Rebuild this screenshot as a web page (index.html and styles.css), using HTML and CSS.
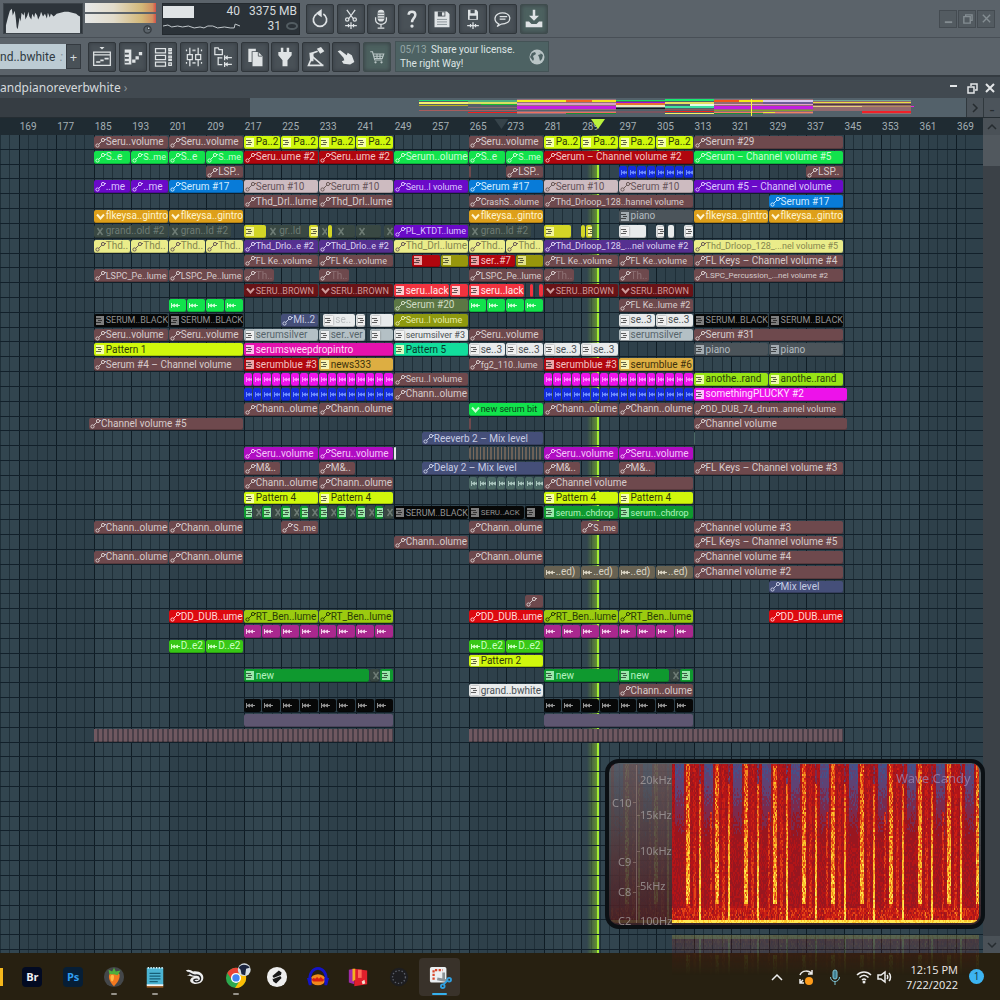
FILE: index.html
```html
<!DOCTYPE html>
<html lang="en">
<head>
  <meta charset="UTF-8">
  <meta name="viewport" content="width=device-width, initial-scale=1.0">
  <title>Playlist</title>
  <link rel="stylesheet" href="styles.css">
</head>
<body>
  <svg class="sprite" aria-hidden="true">
    <symbol id="i-a" viewBox="0 0 11 11"><g fill="none" stroke="currentColor"><circle cx="2.5" cy="8.5" r="1.6"/><circle cx="8" cy="3" r="1.6"/><path d="M3.7 7.3 6.8 4.200M9.500 2.500H11"/></g></symbol>
    <symbol id="i-p" viewBox="0 0 11 11"><path fill="currentColor" opacity=".85" d="M1 1h8v9H1z"/><path stroke="#000" stroke-opacity=".6" d="M1 3.500h5M3 5.500h4M1 7.500h5"/></symbol>
    <symbol id="i-w" viewBox="0 0 11 11"><path fill="currentColor" d="M1 3h1v2l3-1.500V5l3-1.500V5h2v1H8v1.500L5 6v1.500L2 6v2H1z"/></symbol>
    <symbol id="i-v" viewBox="0 0 11 11"><path fill="none" stroke="currentColor" stroke-width="2" d="m2 3.500 3.500 4 3.500-4"/></symbol>
    <symbol id="i-x" viewBox="0 0 11 11"><path fill="none" stroke="currentColor" stroke-width="1.500" d="m2.500 2 5 7m0-7-5 7"/></symbol>
  </svg>

  <header class="toolbar">
    <div class="bar">
      <div class="scope"><svg viewBox="0 0 80 30" preserveAspectRatio="none"><path fill="#d3d9dc" d="M2 30V22L4 14 6 7 8 5 9 12 11 7 12 14 13 24 14 26 16 14 17 18 18 9 20 12 21 8 22 16 24 12 25 8 26 13 28 16 29 10 31 14 32 9 34 12 35 16 37 12 38 8 40 13 42 10 44 15 45 9 47 14 48 10 51 13 54 10 58 9 62 8 66 8 70 9 74 10 76 12 78 13V30z"/></svg></div>
      <div class="meters">
        <i class="meter"></i><i class="meter"></i>
        <svg class="clock" viewBox="0 0 10 10"><circle cx="5" cy="5" r="4" fill="none" stroke="#353b40" stroke-width="1.500"/><path stroke="#353b40" d="M5 2v3h3"/></svg>
      </div>
      <div class="cpu">
        <div class="cpu-graph"><i></i><svg viewBox="0 0 80 12"><path fill="none" stroke="#c5ccd0" d="M0 6l5-1 4 2 6-1 5 1 6-1 6 2 6-1 4 1 4-2 5 0 5 2 7-1 6 1 4 0 1-4 5 2"/></svg></div>
        <div class="cpu-num"><span>40</span><span>3375 MB</span><span></span><span class="poly">31 <svg viewBox="0 0 12 8"><ellipse cx="6" cy="4" rx="5" ry="3" fill="none" stroke="#535d62" stroke-width="2"/></svg></span></div>
      </div>
      <div class="tools main-tools">
        <button title="Undo"><svg viewBox="0 0 24 24"><path class="ln" d="M8 6a8 8 0 1 0 8 0"/><path d="m14 0-7 5 7 5z"/></svg></button>
        <button title="Cut"><svg viewBox="0 0 24 24"><path class="ln thin" d="m7 1 8 11M17 1 9 12"/><circle class="ln thin" cx="7.500" cy="12.500" r="2"/><circle class="ln thin" cx="16.500" cy="12.500" r="2"/><path class="ln thin" d="M5 20h14M9 18v4m3-6v8m3-6v4"/></svg></button>
        <button title="Record"><svg viewBox="0 0 24 24"><rect x="8" y="1" width="8" height="14" rx="4"/><path class="ln thin" d="M5.500 10v3a6.500 5.500 0 0 0 13 0v-3M12 18v4m-4 1h8"/><path stroke="#495157" d="M8 5h8M8 8h8m-8 3h8"/></svg></button>
        <button title="Help"><svg viewBox="0 0 24 24"><path class="ln big" d="M8 7c0-5 8-5 8 0 0 4-4 4-4 9"/><circle cx="12" cy="20.500" r="2"/></svg></button>
        <button title="Save"><svg viewBox="0 0 24 24"><path d="M3 3h15l3 3v16H3z"/><path fill="#495157" d="M7 3h9v6H7z"/><path d="M12 4h3v4h-3z"/><path stroke="#7c858a" d="M6 12.500h12m-12 3h12m-12 3h12"/></svg></button>
        <button title="Save new"><svg viewBox="0 0 24 24"><path d="M6 1h10l2 2v10H6z"/><path fill="#495157" d="M9 1h5v4H9zM8 8h8v4H8z"/><path class="ln thin" d="M5 20h14M9 18v4m3-6v8m3-6v4"/></svg></button>
        <button title="Comments"><svg viewBox="0 0 24 24"><path class="ln thin" d="M7 18c-6-3-6-9-1-12 5-3 13-1 14 4 1 6-5 8-10 8l-5 3z"/><path class="ln thin" d="M8 9h9m-9 3h7"/></svg></button>
        <button title="Export" class="on"><svg viewBox="0 0 24 24"><path d="M10.500 1h3v7H18l-6 6-6-6h4.500zM2 15h4l3 3h6l3-3h4v7H2z"/></svg></button>
      </div>
      <div class="win-btns">
        <button title="Minimize"><svg viewBox="0 0 12 12"><path d="M2 9h8v2H2z"/></svg></button>
        <button title="Restore"><svg viewBox="0 0 12 12"><path class="ln thin" d="M4 4V2h7v6H9M2 4h7v7H2z"/></svg></button>
        <button title="Close"><svg viewBox="0 0 12 12"><path class="ln thin" d="m2 2 8 8m0-8-8 8"/></svg></button>
      </div>
    </div>

    <div class="bar">
      <div class="picker"><span>nd..bwhite</span><i>:</i></div>
      <button class="plus">+</button>
      <div class="tools win-tools">
        <button title="Playlist"><svg viewBox="0 0 24 24"><path d="M9 0h6l-3 3z"/><path class="ln thin" d="M2 6h20v16H2zM2 9.500h20"/><path class="ln" d="M5 18h5m0-2h4m1-2h5"/></svg></button>
        <button title="Piano roll"><svg viewBox="0 0 24 24"><path d="M2 3h8v18H2zM11 15h4v4h-4zm4-4h4v4h-4zm4-5h4v4h-4z"/><path fill="#495157" d="M2 7h5v2H2zm0 5h5v2H2zm0 5h5v2H2z"/></svg></button>
        <button title="Channel rack"><svg viewBox="0 0 24 24"><path class="ln thin" d="M3 2h12v5H3zm0 8h12v5H3zm0 8h12v5H3zM19 2h3v2h-3zm0 4h3v2h-3zm0 5h3v2h-3zm0 4h3v1h-3zm0 4h3v3h-3z"/></svg></button>
        <button title="Mixer"><svg viewBox="0 0 24 24"><path class="ln thin" d="M7 1v8m0 6v8M17 1v8m0 6v8M4 9h6v6H4zm10 0h6v6h-6z"/><path class="ln thin" stroke-dasharray="2 2" d="M3 3v4m8-4v4m2-4v4m8-4v4M3 18v4m8-4v4m2-4v4m8-4v4"/></svg></button>
        <button title="Browser"><svg viewBox="0 0 24 24"><path class="ln thin" d="M1 1h4l1 2h4v6H1zM5 12v9h5m-5-8h5"/><path d="M12 10h1.500v2l3-2v2h5v1.500h-5v2L13.500 13.500V16H12zM12 18h1.500v2l3-2v2h5v1.500h-5v2l-3-2V24H12z"/></svg></button>
        <button title="Project"><svg viewBox="0 0 24 24"><path d="M4 2h9v3H8v13H4z"/><path d="M9 6h7l5 5v12H9z"/><path stroke="#495157" fill="none" d="M16 6v5h5"/></svg></button>
        <button title="Plugins"><svg viewBox="0 0 24 24"><path d="M7 1h3v5h4V1h3v5h3v4l-5 6v7H9v-7L4 10V6h3z"/></svg></button>
        <button title="Tempo tap"><svg viewBox="0 0 24 24"><path d="m13 2 5-2 4 5-5 3z"/><path class="ln" d="M14 5 6 8v7l-3 7h18M7 11l13 11"/><path d="M4 7h5v10H5z"/></svg></button>
        <button title="Touch"><svg viewBox="0 0 24 24"><path d="M2 5l3-1 8 6 1-3 5 3 3 8-5 3-8-1-2-3 3-1-1-3z"/></svg></button>
        <button title="Shop" class="on"><svg viewBox="0 0 24 24"><path class="ln thin" d="M3 5h3l3 11h10M7 8h14l-2 6H9M8 11h12M12 8v6m4-6v6"/><circle cx="10" cy="19" r="1.500"/><circle cx="18" cy="19" r="1.500"/></svg></button>
      </div>
      <a class="news" href="#news">
        <span><b>05/13</b> Share your license.<br>The right Way!</span>
        <svg viewBox="0 0 16 16"><circle cx="8" cy="8" r="7.500" fill="#b9c5c6"/><path fill="#4d6263" d="M3 4l3-1 1 2-3 2 1 3-1 2-3-4zM10 3l4 3-1 4-2 2-1-4-1-2 3-1z"/></svg>
      </a>
    </div>
  </header>

  <main class="playlist">
    <div class="titlebar">
      <h1>andpianoreverbwhite <small>›</small></h1>
      <div class="child-btns">
        <button title="Minimize"><svg viewBox="0 0 12 12"><path d="M2 3h7v2H2z"/></svg></button>
        <button title="Restore"><svg viewBox="0 0 12 12"><path class="ln thin" d="M5 4V2h6v6H9M2 5h6v6H2z"/></svg></button>
        <button title="Close"><svg viewBox="0 0 12 12"><path class="ln" d="m2 2 8 8m0-8-8 8"/></svg></button>
      </div>
    </div>

    <div class="overview">
      <svg id="overview" viewBox="0 0 966 19" preserveAspectRatio="none" shape-rendering="crispEdges"></svg>
      <button title="Scroll right">
        <svg viewBox="0 0 12 12"><path class="ln thin" d="m4 2 4 4-4 4"/></svg>
      </button>
      <button title="Zoom">-</button>
    </div>

    <div class="stage">
      <div class="canvas">
        <div class="ruler" id="ruler"></div>
        <div class="lanes">
          <div class="beats" id="beats"></div>
          <div class="playhead" id="playhead"></div>
          <div class="tracks" id="tracks"></div>
        </div>
      </div>
      <div class="scroll">
        <button title="Up"><svg viewBox="0 0 12 12"><path class="ln thin" d="m2 8 4-4 4 4"/></svg></button>
        <i class="thumb"></i>
        <button title="Down"><svg viewBox="0 0 12 12"><path class="ln thin" d="m2 4 4 4 4-4"/></svg></button>
      </div>
    </div>
  </main>

  <footer class="taskbar">
    <i class="edge"></i>
    <div class="dock">
      <button title="Bridge"><span class="adobe br">Br</span></button>
      <button title="Photoshop"><span class="adobe ps">Ps</span></button>
      <button title="FL Studio" class="open"><svg viewBox="0 0 24 24"><circle cx="12" cy="12" r="11" fill="#44474a"/><path fill="#f4791f" d="M7 9c4-3 9-3 11 0 1 5-3 10-6 13C9 20 5 13 7 9z"/><path fill="#ffb845" d="M9 10c2-1 3 0 3 2s-1 5-2 5-3-5-1-7z"/><path fill="#4fae3c" d="M7 9 6 4l4 2 2-4 2 4 5-1-3 5-4-1z"/></svg></button>
      <button title="Notepad" class="open"><svg viewBox="0 0 24 24"><path fill="#4bb4d3" d="M3 2h18v19H3z"/><path fill="#f3f3f3" d="M3 20h18v2H3z"/><path fill="#b1682a" d="M3 22h18v1.500H3z"/><path stroke="#165f78" stroke-width="1.500" d="M6 8h12M6 11h12M6 14h12M6 17h9"/><path stroke="#d3f2fb" stroke-dasharray="1.500 1.500" stroke-width="2" d="M4 2h17"/></svg></button>
      <button title="Snake"><svg viewBox="0 0 24 24"><path fill="#eee" d="M2 5c3-2 6 0 8 1 7-1 12 3 11 8-1 6-10 7-13 4-3-2 0-6 3-6L3 10c3 0 4-1 3-2z"/><path fill="none" stroke="#222" stroke-width="1.500" d="M4 7c3 0 4 3 8 3 7-1 8 6 3 7-3 1-5-1-4-2s4-1 4 0"/></svg></button>
      <button title="Chrome" class="open"><svg viewBox="0 0 24 24"><circle cx="12" cy="13" r="11" fill="#2da94f"/><path fill="#ea4335" d="M2.500 7.500A11 11 0 0 1 21.500 7.500L12 8l-4.500 7z"/><path fill="#fbbc05" d="M21.500 7.500A11 11 0 0 1 11 24l5-8-2-8z"/><circle cx="12" cy="13" r="5.500" fill="#fff"/><circle cx="12" cy="13" r="4" fill="#4285f4"/><circle cx="21" cy="4" r="7" fill="#d5dde4"/><path fill="#1b2540" d="M15 2c2-5 10-4 12 0l-4 1-1 7-4-1-1-5z"/></svg></button>
      <button title="Splice"><svg viewBox="0 0 24 24"><circle cx="12" cy="12" r="11" fill="#eee"/><path fill="#181818" d="m7 11 7-6 3 2-1 4-7 3zM8 17l-1-3 8-4 2 3-6 6z"/><path stroke="#eee" d="m7 14 10-4"/></svg></button>
      <button title="Audacity"><svg viewBox="0 0 24 24"><ellipse cx="12" cy="15" rx="8" ry="6" fill="#f08a1c"/><path fill="#d81e12" d="m5 15 2-2 2 1 2-2 2 2 2-2 2 2 2 1-2 2H7z"/><path fill="none" stroke="#1414c8" stroke-width="3" d="M3 16C2-2 22-2 21 16"/><path fill="#1414c8" d="M0 13h5v8H2zM24 13h-5v8h3z"/></svg></button>
      <button title="WinRAR"><svg viewBox="0 0 24 24"><path fill="#a02aa8" d="M2 4l6-1v17l-6-2z"/><path fill="#e0202c" d="M8 3l14 2v15L8 22z"/><path fill="#f4b31e" d="M6 3l3 0v12l-3 2z"/><path fill="#ff6b58" d="M12 4h4v9h-4z"/><path fill="#f0e0d0" d="M16 17l3-2 1 4-3 1z"/></svg></button>
      <button title="Recorder"><svg viewBox="0 0 24 24"><circle cx="12" cy="12" r="10" fill="#1d1d20"/><circle cx="12" cy="12" r="7" fill="none" stroke="#5a5e68" stroke-dasharray="1.500 2" stroke-width="1.500"/></svg></button>
      <button title="Snipping Tool" class="open active"><svg viewBox="0 0 24 24"><rect x="1" y="1" width="18" height="17" rx="2" fill="#eceff1"/><path fill="none" stroke="#d9472b" stroke-width="2.500" stroke-dasharray="2.500 1.500" d="M5 15V4.500h10"/><path stroke="#8b9296" fill="none" stroke-width="3" d="M16 7v8M9 14l10 2"/><circle cx="22" cy="15" r="2" fill="none" stroke="#2f9fe0" stroke-width="2"/><circle cx="15" cy="22" r="2" fill="none" stroke="#2f9fe0" stroke-width="2"/><path stroke="#2f9fe0" stroke-width="2" d="m20 16-4 4"/></svg></button>
    </div>
    <div class="tray">
      <svg viewBox="0 0 16 16"><path class="ln thin" d="m3 11 5-5 5 5"/></svg>
      <svg viewBox="0 0 16 16"><path class="ln thin" d="M2 6c2-5 9-5 12-1m0-4v4h-4M6 14H2v-4m0 4 3-3"/><circle cx="11" cy="12" r="4" fill="#ff9c1a"/></svg>
      <svg viewBox="0 0 16 16"><rect x="6" y="1" width="4" height="9" rx="2" fill="#3f7f92" stroke="#7fc4d6"/><path fill="none" stroke="#7fc4d6" d="M3.500 8c0 6 9 6 9 0M8 12.500V16"/></svg>
      <svg viewBox="0 0 16 16"><path class="ln thin" d="M1 6c4-4 10-4 14 0M3.500 8.500c3-3 6-3 9 0M6 11c1.500-1.500 2.500-1.500 4 0"/><circle cx="8" cy="13" r="1.500"/></svg>
      <svg viewBox="0 0 16 16"><path class="ln thin" d="M1 6h3l4-3v10l-4-3H1zM10 6c1 1 1 3 0 4m2-6c2 2 2 6 0 8"/></svg>
      <time>12:15 PM<br>7/22/2022</time>
      <b class="badge">1</b>
    </div>
  </footer>

  <svg class="candy" id="candy" viewBox="0 0 380 216" shape-rendering="crispEdges">
    <defs>
      <linearGradient id="glass" x2="0" y2="1"><stop offset="0" stop-color="#5c6367"/><stop offset=".4" stop-color="#474a4e"/><stop offset="1" stop-color="#3a1c20"/></linearGradient>
      <linearGradient id="fade" x2="0" y2="1"><stop offset="0" stop-color="#fff"/><stop offset="1" stop-color="#000"/></linearGradient>
      <mask id="mirror"><rect x="0" y="176" width="380" height="40" fill="url(#fade)"/></mask>
      <clipPath id="inner"><rect x="4" y="4" width="370" height="160" rx="8"/></clipPath>
    </defs>
    <rect x="2" y="2" width="376" height="166" rx="12" fill="url(#glass)" fill-opacity=".85" stroke="#0b1014" stroke-width="4" shape-rendering="auto"/>
    <g clip-path="url(#inner)"><g id="heat-left" opacity=".14"></g><g id="heat"></g></g>
    <g mask="url(#mirror)"><use href="#heat" transform="matrix(1 0 0 -1 0 341)" opacity=".2"/></g>
    <g class="candy-text">
      <path d="M31 6v158M28 43h3M31 56h4M31 92h4M28 103h3M31 127h4M28 133h3" stroke="#a08a80" opacity=".7"/>
      <text x="35" y="25">20kHz</text><text x="35" y="60">15kHz</text><text x="35" y="96">10kHz</text><text x="35" y="131">5kHz</text><text x="35" y="166">100Hz</text>
      <text x="7" y="48">C10</text><text x="13" y="107">C9</text><text x="13" y="137">C8</text><text x="13" y="166">C2</text>
      <text class="brand" x="291" y="24">Wave Candy</text>
    </g>
  </svg>

  <script src="script.js"></script>
</body>
</html>
```
FILE: styles.css
```css
* {
  box-sizing: border-box;
  margin: 0;
  padding: 0;
}
body {
  display: flex;
  flex-direction: column;
  height: 100vh;
  overflow: hidden;
  position: relative;
  font-family: 'Noto Sans', 'Open Sans', sans-serif;
  background: #2f3f48;
  color: #d5dadd;
}
button {
  border: none;
  background: none;
  color: inherit;
  font: inherit;
}
svg {
  display: block;
  fill: currentColor;
}
.sprite {
  position: absolute;
  width: 0;
  height: 0;
}
.ln {
  fill: none;
  stroke: currentColor;
  stroke-width: 2;
}
.ln.thin { stroke-width: 1.5; }
.ln.big { stroke-width: 3; }

/* toolbar */
.toolbar {
  background: #5b636a;
  border-bottom: 2px solid #343b41;
}
.bar {
  display: flex;
  align-items: center;
  height: 38px;
  border-bottom: 1px solid #484f56;
}
.bar + .bar {
  height: 37px;
  border-bottom: none;
}
.scope {
  width: 80px;
  height: 31px;
  margin-left: 3px;
  background: #2d343a;
  border: 1px solid #3c4349;
}
.scope svg { width: 100%; height: 100%; }
.meters {
  width: 71px;
  height: 31px;
  margin-left: 2px;
  display: flex;
  flex-direction: column;
  gap: 2px;
}
.meter {
  height: 9px;
  background: linear-gradient(to right, #e6e8e8, #e2dccb 40%, #d3b878 80%, #d09060 95%, #d5504a);
}
.clock {
  width: 9px;
  height: 9px;
  margin-left: 58px;
}
.cpu {
  display: flex;
  width: 138px;
  height: 32px;
  margin-left: 6px;
  background: #2b3238;
  border: 1px solid #242a2f;
  font-size: 12px;
  line-height: 15px;
}
.cpu-graph { width: 54px; }
.cpu-graph i {
  display: block;
  width: 31px;
  height: 12px;
  margin-top: 2px;
  background: #dfe3e5;
}
.cpu-graph svg { width: 78px; height: 12px; margin-top: 2px; }
.cpu-num {
  flex: 1;
  display: grid;
  grid-template-columns: 23px 1fr;
  text-align: right;
  font-family: Roboto, sans-serif;
  white-space: nowrap;
}
.cpu-num span:nth-child(2) { padding-right: 2px; }
.poly {
  display: flex;
  align-items: center;
  justify-content: flex-end;
  gap: 4px;
}
.poly svg { width: 14px; height: 8px; }
.tools {
  display: flex;
  justify-content: space-between;
}
.main-tools { width: 242px; margin-left: 6px; }
.win-tools { width: 303px; margin-left: 7px; }
.tools button {
  display: grid;
  place-items: center;
  width: 28px;
  height: 30px;
  border: 1px solid #30363b;
  border-radius: 2px;
  background: #495157;
  box-shadow: inset 0 0 4px #373d43;
}
.tools button.on {
  background: #4c615f;
  border-color: #3f4c4d;
}
.tools svg { width: 20px; height: 20px; color: #dfe3e5; }
.win-tools .on svg { width: 18px; height: 18px; color: #b9c5c5; }
.win-btns {
  display: flex;
  margin-left: auto;
  margin-right: 5px;
  gap: 1px;
}
.win-btns button {
  display: grid;
  place-items: center;
  width: 18px;
  height: 18px;
  border: 1px solid #444b51;
  background: #535b61;
  color: #848d92;
}
.win-btns svg { width: 11px; height: 11px; }
.picker {
  display: flex;
  justify-content: space-between;
  align-items: center;
  width: 66px;
  height: 25px;
  background: #bccbd3;
  color: #2f3a42;
  font: 12px Roboto, sans-serif;
}
.picker i { padding-right: 3px; color: #7a8990; }
.plus {
  width: 15px;
  height: 25px;
  border: 1px solid #343a40;
  background: #495157;
  font-size: 13px;
  line-height: 20px;
}
.news {
  display: flex;
  align-items: center;
  justify-content: space-between;
  width: 154px;
  height: 31px;
  margin-left: 4px;
  padding: 0 3px 0 4px;
  background: #4d6263;
  border: 1px solid #445356;
  color: #dde4e4;
  font-family: Roboto, 'Noto Sans', sans-serif;
  font-size: 10px;
  line-height: 14px;
  text-decoration: none;
  white-space: nowrap;
}
.news b { font-weight: normal; color: #94a5a5; padding-right: 2px; }
.news svg { width: 16px; height: 16px; }

/* playlist window */
.playlist {
  flex: 1;
  min-height: 0;
  display: flex;
  flex-direction: column;
}
.titlebar {
  display: flex;
  align-items: center;
  justify-content: space-between;
  height: 21px;
  background: #414950;
}
.titlebar h1 {
  font-size: 12px;
  font-weight: normal;
}
.titlebar small { font-size: 12px; color: #8a9298; }
.child-btns { display: flex; gap: 6px; padding-right: 4px; color: #e3e6e8; }
.child-btns svg { width: 12px; height: 12px; }
.overview {
  display: flex;
  height: 20px;
  border-bottom: 1px solid #252d32;
  background: #53616a;
}
.overview > svg { flex: 1; min-width: 0; height: 19px; }
.overview button {
  display: grid;
  place-items: center;
  width: 17px;
  border-left: 1px solid #30383d;
  background: #4c545b;
  color: #262c30;
}
.overview button svg { width: 12px; height: 12px; }
.stage {
  flex: 1;
  min-height: 0;
  display: flex;
}
.canvas {
  flex: 1;
  min-width: 0;
  min-height: 0;
  display: flex;
  flex-direction: column;
}

/* one column per quarter bar */
.ruler,
.beats,
.track {
  display: grid;
  grid-template-columns: repeat(839, minmax(0, 1fr));
}
.ruler {
  position: relative;
  height: 17px;
  background: #1f2b32;
  font: 10px/18px Roboto, sans-serif;
  color: #a3aeb4;
}
.ruler span { padding-left: 1px; white-space: nowrap; }
.marker {
  position: absolute;
  top: 1px;
  width: 14px;
  height: 10px;
  margin-left: -7px;
  background: #b9f23c;
  clip-path: polygon(0 0, 100% 0, 50% 100%);
}
.marker.dim { background: #36434a; }
.lanes {
  flex: 1;
  min-height: 0;
  position: relative;
  display: flex;
  padding-bottom: 3px;
  background: #2e404a;
}
.beats {
  position: absolute;
  inset: 0;
}
.beats i { border-left: 1px solid #1f2f38; }
.beats i.bar8 { border-left-color: #0f1c24; }
.beats i.light { background: #32454f; }
.playhead {
  position: absolute;
  top: 0;
  bottom: 0;
  width: 12px;
  margin-left: -11px;
  border-right: 2px solid #a5ee34;
  background: linear-gradient(to right, #6fa02c00, #6fa02ccc);
}
.tracks {
  position: relative;
  flex: 1;
  display: grid;
  grid-template-rows: repeat(55, minmax(0, 1fr));
}
.track {
  min-height: 0;
  border-bottom: 1px solid #12202a;
  grid-template-rows: 100%;
}
.clip {
  display: flex;
  align-items: center;
  grid-row: 1;
  min-width: 0;
  margin-top: 1px;
  margin-right: 1px;
  padding-left: 1px;
  overflow: hidden;
  border-radius: 2px;
  box-shadow: inset 0 -1px #0003;
  font: 10px/12px Roboto, 'Noto Sans', sans-serif;
  white-space: nowrap;
}
.clip svg { flex: none; width: 11px; height: 11px; }
.clip.small { font-size: 9px; }
.clip.tiny { font-size: 8px; }
.clip.faint span { opacity: .3; }

.brown { background: #6e494d; color: #d6cbcb; }
.lime { background: #d0f80c; color: #2f3a08; }
.green { background: #12e24c; color: #caffd4; }
.red { background: #b0060e; color: #f3c2c2; }
.violet { background: #6a0ac8; color: #dcc4ff; }
.blue { background: #087bd8; color: #d0ecff; }
.pink { background: #cdbbc0; color: #66545a; }
.orange { background: #dd9f1a; color: #fff5cf; }
.mute { background: #394843; color: #6d7b74; }
.yellow { background: #d3d626; color: #f8f8b0; }
.cream { background: #eaec8a; color: #85864e; }
.purple { background: #553090; color: #dcd2f2; }
.maroon { background: #681317; color: #cf9a9a; }
.crimson { background: #f2323e; color: #ffe9e9; }
.mustard { background: #97960c; color: #efeea0; }
.moss { background: #5c7744; color: #cfdcc2; }
.olive { background: #8d990f; color: #e6eba8; }
.black { background: #070808; color: #929292; }
.silver { background: #b4c0c5; color: #56646a; }
.white { background: #e8ebec; color: #4a5054; }
.magenta { background: #e412ad; color: #ffdcf5; }
.aqua { background: #12dd9c; color: #06382a; }
.gold { background: #ddae42; color: #3c300c; }
.hot { background: #ed12ea; color: #ff8cff; }
.royal { background: #142cdc; color: #6d8cff; }
.slate { background: #454f79; color: #c5cbe2; }
.gray { background: #4b545a; color: #b3bbc0; }
.apple { background: #98e416; color: #28400a; }
.orchid { background: #b00cc2; color: #f3c4f8; }
.forest { background: #0f992f; color: #b4f3c0; }
.foam { background: #4b6865; color: #a9c4bd; }
.tan { background: #686252; color: #d9d3c2; }
.scarlet { background: #dd0a10; color: #ffd6d6; }
.citrus { background: #9bcb10; color: #2a3c06; }
.plum { background: #a9288e; color: #f3cbea; }
.grass { background: #37c716; color: #cbffc0; }
.dusk { background: #5e5671; }
.comb { background: repeating-linear-gradient(to right, #6f5860 0 3px, #493f48 3px 5px); border-radius: 0; }
.hatch { background: repeating-linear-gradient(to right, #6b6158 0 2px, #33424a 2px 4px, #7a6a5c 4px 5px, #33424a 5px 7px); }
.lit { color: #ffe2ff; }
.ink { color: #0b4018; }
.ink svg { color: #caffd4; }
.silver svg, .white svg { color: #fff; filter: drop-shadow(0 0 1px #777); }
.lime svg, .gold svg, .apple svg, .aqua svg { color: #fbffc8; }
.pink svg, .cream svg { color: #6b5a58; }

.scroll {
  display: flex;
  flex-direction: column;
  width: 17px;
  background: #3b4147;
}
.scroll button {
  display: grid;
  place-items: center;
  height: 17px;
  background: #4a5157;
  color: #262c30;
}
.scroll svg { width: 12px; height: 12px; }
.scroll button:last-child { margin-top: auto; }
.thumb { height: 31px; background: #51585e; }

/* taskbar */
.taskbar {
  display: flex;
  align-items: center;
  height: 47px;
  background: #272011;
}
.edge { width: 3px; height: 18px; background: #f5b81c; }
.dock {
  display: flex;
  width: 448px;
  margin-left: 9px;
}
.dock button {
  position: relative;
  flex: 1;
  display: grid;
  place-items: center;
  height: 38px;
  border-radius: 4px;
}
.dock svg { width: 22px; height: 22px; overflow: visible; }
.dock .active { background: #39322a; }
.dock .open::after {
  content: '';
  position: absolute;
  bottom: 1px;
  width: 6px;
  height: 2px;
  border-radius: 1px;
  background: #96928a;
}
.dock .active::after { width: 15px; background: #35b0ec; }
.adobe {
  width: 20px;
  height: 20px;
  border-radius: 4px;
  font: bold 11px/20px 'Open Sans', sans-serif;
}
.br { background: #020a22; color: #f0f0f4; }
.ps { background: #061e36; color: #2f9df0; }
.tray {
  display: flex;
  align-items: center;
  gap: 13px;
  margin-left: auto;
  padding-right: 16px;
  color: #eee;
}
.tray svg { width: 16px; height: 16px; }
.tray svg:nth-child(5) { margin-left: -8px; }
.tray time {
  font: 11px/15px 'Open Sans', sans-serif;
  text-align: right;
}
.badge {
  width: 15px;
  height: 15px;
  margin-left: -2px;
  border-radius: 50%;
  background: #3cb4f2;
  color: #10303f;
  font: 10px/15px 'Open Sans', sans-serif;
  text-align: center;
}

/* analyser floating over the playlist */
.candy {
  position: absolute;
  right: 15px;
  bottom: 25px;
  width: 380px;
  height: 216px;
  pointer-events: none;
}
.candy-text {
  font: 11px 'Noto Sans', sans-serif;
  fill: #a8a3a3;
  opacity: .75;
}
.candy-text .brand { font-size: 13px; fill: #9a86b4; }
```
FILE: script.js
```js
const FIRST = 165;      // bar at the left edge
const STEPS = 4;        // grid columns per bar
const COLS = 839;
const TRACKS = 55;

// start-end[/repeat] colour icon label
const rows = [
  '185-201 brown a Seru..volume|201-217 brown a Seru..volume|217-249/4 lime p Pa..2|265-281 brown a Seru..volume|281-313/4 lime p Pa..2|313-345 brown a Serum #29',
  '185-193 green a S..e|193-201 green a S..me|201-209 green a S..e|209-217 green a S..me|217-249/2 red a Seru..ume #2|249-265 green a Serum..olume|265-273 green a S..e|273-281 green a S..me|281-313 red a Serum – Channel volume #2|313-345 green a Serum – Channel volume #5',
  '209-217 brown a LSP..|265-265.75 brown -|273-281 brown a LSP..|297-313/8 royal w|337-345 brown a LSP..',
  '185-201/2 violet a ..me|201-217 blue a Serum #17|217-249/2 pink a Serum #10|249-265 violet a Seru..l volume|265-281 blue a Serum #17|281-313/2 pink a Serum #10|313-345 violet a Serum #5 – Channel volume',
  '217-249/2 brown a Thd_Drl..lume|265-281 brown a CrashS..olume|281-313 brown a Thd_Drloop_128..hannel volume|329-345 blue a Serum #17',
  '185-217/2 orange v flkeysa..gintro|265-281 orange v flkeysa..gintro|297-313 gray p piano|313-345/2 orange v flkeysa..gintro',
  '185-201 mute x grand..old #2|201-214.5 mute x gran..ld #2|217-222 yellow p|222-231 mute x gr..ld|231-233 yellow p|233-235 mute x|235-236 yellow -|236.5-241 mute x|241-246.5 mute x|247-249 mute x|249-265 violet a PL_KTDT..lume|265-278.5 mute x gran..ld #2|281-287 yellow p|289-290 yellow -|290-291.5 yellow p|297-303 white p|305-307 white p|307.5-309 white -|311-313 white p',
  '185-217/4 cream a Thd..|217-249/2 purple a Thd_Drlo..e #2|249-265 cream a Thd_Drl..lume|265-281/2 cream a Thd..|281-313 purple a Thd_Drloop_128_...nel volume #2|313-345 cream a Thd_Drloop_128_...nel volume #5',
  '217-249/2 brown a FL Ke..volume|253-259 red p|259-265 mustard p|265-275 red p ser..#7|275-281 mustard p|281-313/2 brown a FL Ke..volume|313-345 brown a FL Keys – Channel volume #4',
  '185-217/2 brown a LSPC_Pe..lume|217-223.75 brown,faint a Th..|233-239.75 brown,faint a Th..|265-281 brown a LSPC_Pe..lume|281-287.75 brown,faint a Th..|297-303.75 brown,faint a Th..|313-345 brown a LSPC_Percussion_...nel volume #2',
  '217-249/2 maroon v SERU..BROWN|249-261 crimson p seru..lack|261-265 crimson p|265-277 crimson p seru..lack|278-279 crimson -|280-281 crimson -|281-313/2 maroon v SERU..BROWN',
  '201-217/4 green w|249-265 moss a Serum #20|265-281/4 green w|297-313 brown a FL Ke..lume #2',
  '185-217/2 black p SERUM..BLACK|225-233 slate a Mi..2|234-241 white,faint p se..|241-243 white p|244-249 white p|249-265 olive a Seru..l volume|297-313/2 white p se..3|313-345/2 black p SERUM..BLACK',
  '185-217/2 brown a Seru..volume|217-233 silver p serumsilver|233-243 silver p ser..ver|244-249 silver p|249-265 white p serumsilver #3|265-281 brown a Seru..volume|297-313 silver p serumsilver|313-345 brown a Serum #31',
  '185-217 lime p Pattern 1|217-249 magenta p serumsweepdropintro|249-265 aqua p Pattern 5|265-297/4 white p se..3|313-345/2 gray p piano',
  '185-217 brown a Serum #4 – Channel volume|217-233 red p serumblue #3|233-249 gold p news333|265-281 brown a fg2_110..lume|281-297 red p serumblue #3|297-313 gold p serumblue #6',
  '217-249/16 hot w|249-265 brown a Seru..l volume|281-313/16 hot w|313-345/2 apple p anothe..rand',
  '217-249/16 royal w|249-265 brown a Chann..olume|281-313/16 royal w|313-346 hot,lit p somethingPLUCKY #2',
  '217-249/2 brown a Chann..olume|265-281 green,ink v new serum bit|281-313/2 brown a Chann..olume|313-345 brown a DD_DUB_74_drum..annel volume',
  '184-217 brown a Channel volume #5|265-265.75 brown -|313-346 brown a Channel volume',
  '255-281 slate a Reeverb 2 – Mix level|313-313.5 foam -',
  '217-249/2 orchid a Seru..volume|249-249.75 white -|265-281 hatch -|281-313/2 orchid a Seru..volume',
  '217-225 brown a M&..|233-241 brown a M&..|255-281 slate a Delay 2 – Mix level|281-289 brown a M&..|297-305 brown a M&..|313-345 brown a FL Keys – Channel volume #3',
  '217-249/2 brown a Chann..olume|265-281/8 foam w|281-313 brown a Channel volume',
  '217-249/2 lime p Pattern 4|281-313/2 lime p Pattern 4',
  '217-219 forest p|219-221 mute x|221-223 forest p|223-225 mute x|225-227 forest p|227-229 mute x|229-231 forest p|231-233 mute x|233-235 forest p|235-237 mute x|237-239 forest p|239-241 mute x|241-243 forest p|243-245 mute x|245-247 forest p|247-249 mute x|249-265 black p SERUM..BLACK|265-277 black p SERU..ACK|277-281 black p|281-313/2 forest p serum..chdrop',
  '185-217/2 brown a Chann..olume|225-233 brown a S..me|265-281 brown a Chann..olume|289-297 brown a S..me|313-345 brown a Channel volume #3',
  '249-265 brown a Chann..olume|313-345 brown a FL Keys – Channel volume #5',
  '185-217/2 brown a Chann..olume|265-281 brown a Chann..olume|313-345 brown a Channel volume #4',
  '281-313/4 tan w ..ed)|313-345 brown a Channel volume #2',
  '329-345 slate a Mix level',
  '277-281 brown a',
  '201-217 scarlet a DD_DUB..ume|217-249/2 citrus a RT_Ben..lume|265-281 scarlet a DD_DUB..ume|281-313/2 citrus a RT_Ben..lume|329-345 scarlet a DD_DUB..ume',
  '217-249/8 plum w|281-313/8 plum w',
  '201-217/2 grass w D..e2|265-281/2 grass w D..e2',
  '265-281 lime p Pattern 2',
  '217-244 forest p new|244-246 mute x|246-249 forest p|281-297 forest p new|297-308 forest p new|308-310 mute x|310-313 forest p',
  '265-281 white p grand..bwhite|297-313 brown a Chann..olume',
  '217-249/8 black w|281-313/8 black w',
  '217-249 dusk -|281-313 dusk -',
  '185-249 comb -|265-345 comb -'
];

const col = bar => Math.round((bar - FIRST) * STEPS) + 1;
const percent = bar => (bar - FIRST) * STEPS / COLS * 100 + '%';

function clip(start, end, colours, icon, label) {
  const cls = 'clip ' + colours.replace(',', ' ');
  const svg = icon && icon !== '-' ? `<svg><use href="#i-${icon}"/></svg>` : '';
  const text = label ? `<span>${label.replace('&', '&amp;')}</span>` : '';
  return `<div class="${cls}" style="grid-column:${col(start)}/${col(end)}">${svg}${text}</div>`;
}

function track(line) {
  if (!line) return '<div class="track"></div>';
  let html = '';
  line.split('|').forEach(item => {
    const [span, colours, icon, ...words] = item.split(' ');
    const [range, times] = span.split('/');
    const [start, end] = range.split('-').map(Number);
    const n = Number(times || 1);
    const len = (end - start) / n;
    for (let i = 0; i < n; i++) {
      html += clip(start + i * len, start + (i + 1) * len, colours, icon, words.join(' '));
    }
  });
  return `<div class="track">${html}</div>`;
}

let tracks = '';
for (let i = 0; i < TRACKS; i++) tracks += track(rows[i]);
document.getElementById('tracks').innerHTML = tracks;

// step the label size down when it does not fit its clip
document.querySelectorAll('.clip span').forEach(span => {
  const box = span.parentElement;
  ['small', 'tiny'].forEach(size => {
    if (box.scrollWidth > box.clientWidth) {
      box.classList.remove('small');
      box.classList.add(size);
    }
  });
});

// ruler and beat lines
let ruler = '';
for (let bar = 169; bar <= 369; bar += 8) {
  ruler += `<span style="grid-column:${col(bar)}/span 20">${bar}</span>`;
}
ruler += `<i class="marker dim" style="left:${percent(272)}"></i><i class="marker" style="left:${percent(292.6)}"></i>`;
document.getElementById('ruler').innerHTML = ruler;

let beats = '';
for (let bar = FIRST; bar < 373; bar += 2) {
  const cls = ((bar - 169) % 8 === 0 ? 'bar8 ' : '') + (Math.floor((bar - 169) / 16) % 2 ? 'light' : '');
  beats += `<i class="${cls}" style="grid-column:${col(bar)}/span 8"></i>`;
}
document.getElementById('beats').innerHTML = beats;
document.getElementById('playhead').style.left = percent(292.6);

// song overview: x, width, y, height, colour
const strips = [
  [0, 250, 0, 19, '#363d43'],
  [419, 49, 2, 1, '#19e070'], [419, 49, 4, 2, '#f4f070'], [419, 49, 7, 1, '#b9b020'], [419, 98, 12, 1, '#a85c5c'],
  [468, 49, 2, 2, '#4cb080'], [468, 49, 4, 2, '#d8e060'], [481, 36, 6, 1, '#18b838'], [468, 49, 9, 1, '#8a6a70'], [468, 49, 14, 1, '#f02020'],
  [517, 99, 1, 15, '#93707c'], [517, 49, 2, 2, '#f6f020'], [566, 26, 2, 2, '#f06820'], [592, 24, 2, 2, '#f6e820'], [517, 99, 5, 2, '#dc9cc4'], [517, 99, 8, 3, '#c41ee0'], [517, 99, 12, 1, '#58616a'], [517, 99, 14, 1, '#f07060'], [566, 50, 15, 1, '#1c8c38'],
  [616, 49, 2, 1, '#18e060'], [616, 49, 4, 1, '#a010e0'], [616, 49, 5, 2, '#e87030'], [616, 49, 7, 2, '#e8e8c0'], [616, 49, 10, 1, '#14181c'], [616, 49, 13, 2, '#7a5560'],
  [665, 49, 1, 2, '#18e870'], [665, 49, 4, 2, '#e8e060'], [690, 24, 6, 3, '#e8f8e8'], [665, 49, 8, 2, '#40e0a0'], [665, 49, 11, 1, '#8a5a60'], [665, 49, 13, 1, '#f02020'], [665, 49, 15, 1, '#f4f060'],
  [714, 99, 1, 15, '#906c74'], [714, 25, 2, 2, '#f05818'], [739, 24, 2, 2, '#f6ec18'], [763, 50, 2, 2, '#d8c8ec'], [763, 50, 4, 2, '#6c5c98'], [714, 99, 6, 1, '#e8a0c8'], [714, 99, 8, 3, '#c41ee0'], [714, 99, 12, 1, '#80a030'], [714, 99, 14, 1, '#f08060'], [714, 49, 15, 1, '#1c8c38'], [763, 12, 14, 1, '#e8e830'],
  [813, 98, 2, 14, '#946a6e'], [813, 98, 2, 1, '#70a898'], [813, 98, 4, 1, '#e8e040'], [813, 98, 6, 1, '#4c3c38'], [813, 49, 8, 1, '#e8d080'], [862, 49, 8, 1, '#b08c60'], [911, 3, 8, 1, '#f020e0'], [813, 49, 13, 3, '#53616a'], [862, 49, 13, 2, '#f02028'],
  [751, 1, 1, 17, '#f8f840']
];
document.getElementById('overview').innerHTML = strips.map(([x, w, y, h, c]) =>
  `<rect x="${x}" y="${y}" width="${w}" height="${h}" fill="${c}"/>`).join('');

// spectrogram, one path for each heat level
const heatColours = ['#465089', '#5f4274', '#7c2a4c', '#99161f', '#b31518', '#cb2014', '#e24416', '#f28a20', '#fcc42c', '#ffe650'];
let seed = 7;
function noise() {
  seed = (seed * 16807) % 2147483647;
  return seed / 2147483647;
}

function heat(x, t) {
  const p = (x + 290) % 29;
  const beat = Math.floor((x + 290) / 29) % 2;
  let v = t < .5 ? .3 + t * 6 : 3.4;
  let grain = 1;
  if (p >= 14 && p < 18) { v = t < .88 ? 6 + t * 2 : 5; grain = 3; }
  else if (p >= 21 && p < 24) { v = 4 + t * 1.6; grain = 2; }
  else if (p >= 27) { v = t < .12 ? 2 : 5.6 + t * 3; grain = 2; }
  else if (beat && p > 8 && p < 11 && t > .3) { v = 5; grain = 3; }
  else if (p >= 12 || p < 3) v = Math.max(v, 3.6);
  if (t > .9) { v = Math.max(v, 4.5); grain = 3; }
  if (t > .98) v = 9;
  return v + (noise() - .5) * grain;
}

function drawHeat(id, x0, width) {
  const paths = heatColours.map(() => '');
  for (let y = 0; y < 159; y += 2) {
    for (let x = 0; x < width; x++) {
      const level = Math.max(0, Math.min(9, Math.round(heat(x, y / 159))));
      paths[level] += `M${x0 + x} ${y + 5}h1v2h-1z`;
    }
  }
  document.getElementById(id).innerHTML = paths.map((d, i) => `<path fill="${heatColours[i]}" d="${d}"/>`).join('');
}
drawHeat('heat', 67, 307);
drawHeat('heat-left', 6, 61);
```
